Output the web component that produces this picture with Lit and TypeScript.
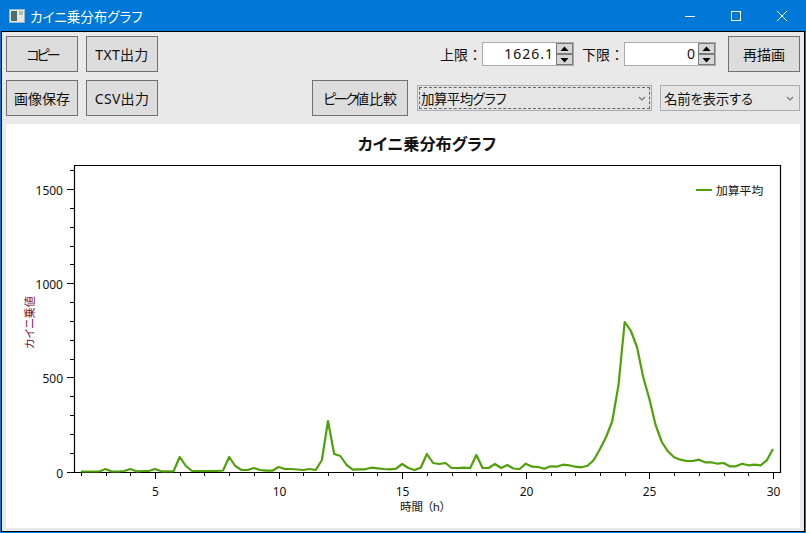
import { LitElement, html, css, svg } from "lit";
import { customElement } from "lit/decorators.js";

// Curve height in px above the zero line, one value per quarter hour from t=2 to t=30.
const H = [
  0.5, 0.5, 0.5, 0.5, 3, 0.5, 0.5, 1, 3, 0.7, 1, 1, 3, 0.7, 0.7, 0.7,
  15, 6, 1, 1, 1, 1, 1, 1.5, 15, 6, 2, 2, 4, 2, 1.3, 1.3,
  5, 3, 3, 2.5, 2, 3, 2, 12, 51, 18, 16, 7, 2.3, 2.7, 2.7, 4.3,
  3.7, 3, 2.7, 3.3, 8, 4, 2, 4.3, 18, 9, 8, 9, 4, 4, 4.3, 4,
  17, 4, 4, 8, 4, 7, 3.5, 3, 8.3, 5.3, 5, 3.3, 5.7, 5.3, 7.3, 6.7,
  5.3, 4.7, 6.3, 12, 23, 35, 51, 87, 150, 141, 125, 95, 73, 47, 30, 20.7,
  14.7, 12.3, 11, 11, 12.3, 9.7, 9.7, 8.3, 9, 5.7, 5.7, 8.3, 6.7, 7.3, 6.7, 11.7,
  23,
];

const X = (t: number) => 155 + (t - 5) * 24.72;
const Y = (v: number) => 472 - v * 0.1882;

const POINTS = H.map((h, i) => `${X(2 + i * 0.25).toFixed(1)},${(472 - h).toFixed(1)}`).join(" ");

@customElement("app-spin")
class AppSpin extends LitElement {
  static properties = { value: {} };
  value = "";
  static styles = css`
    :host { display: flex; height: 24px; border: 1px solid #ababab; box-sizing: border-box; background: #fff; }
    .val { width: 73px; text-align: right; font-size: 14px; line-height: 22px; padding-right: 2px; box-sizing: border-box; color: #111; letter-spacing: 1px; }
    .btns { display: flex; flex-direction: column; width: 17px; background: #a9a9a9; gap: 0; }
    .b { flex: 1; background: #d6d6d6; border: 1px solid #7a7a7a; box-sizing: border-box; display: flex; align-items: center; justify-content: center; }
    svg { display: block; }
  `;
  render() {
    return html`<div class="val">${this.value}</div>
      <div class="btns">
        <div class="b"><svg width="9" height="6" viewBox="0 0 9 6"><path d="M4.5 0.5L8.5 5H0.5Z" fill="#000"/></svg></div>
        <div class="b"><svg width="9" height="6" viewBox="0 0 9 6"><path d="M4.5 5.5L8.5 1H0.5Z" fill="#000"/></svg></div>
      </div>`;
  }
}

@customElement("app-root")
class AppRoot extends LitElement {
  static styles = css`
    :host {
      display: block; width: 806px; height: 533px; box-sizing: border-box; overflow: hidden;
      background: #0078d7; font-family: "Noto Sans", "Noto Sans CJK JP", sans-serif;
      font-feature-settings: "palt"; color: #111;
    }
    .titlebar { height: 31px; display: flex; align-items: center; color: #fff; padding-right: 1px; }
    .appicon { margin: 0 5px 0 9px; display: block; }
    .ttl { font-size: 13.5px; flex: 1; }
    .wbtn { width: 46px; height: 31px; display: flex; align-items: center; justify-content: center; }
    .wbtn svg { display: block; }
    .client {
      margin: 0 1px 1px; height: 501px; box-sizing: border-box; border: 1px solid #000;
      background: #e9e9e9; padding: 4px 4px 3px;
      display: flex; flex-direction: column;
    }
    .row { display: flex; align-items: center; height: 36px; gap: 8px; }
    .row + .row { margin: 8px 0; }
    button {
      width: 72px; height: 36px; padding: 0; margin: 0; border: 1px solid #707070; background: #dddddd;
      font: inherit; font-size: 14px; color: #111; font-feature-settings: "palt";
    }
    .kana { letter-spacing: -3px; }
    .lat { letter-spacing: 0.3px; }
    .wide { width: 96px; margin-left: 146px; }
    .wide .kana { letter-spacing: -2.5px; }
    .lim { display: flex; align-items: center; margin-left: auto; margin-right: 4px; }
    .lab { font-size: 14px; width: 42px; flex: none; font-feature-settings: normal; }
    .lab2 { margin-left: 8px; }
    .combo {
      height: 26px; box-sizing: border-box; border: 1px solid #acacac; background: #e5e5e5;
      font-size: 13.5px; display: flex; align-items: center; justify-content: space-between;
      padding: 0 5px 0 3px; position: relative;
    }
    .c1 { width: 235px; margin-left: 1px; letter-spacing: -0.6px; }
    .c2 { width: 140px; letter-spacing: -0.3px; }
    .focus { position: absolute; inset: 1px; border: 1px dashed #666; pointer-events: none; }
    .chart { flex: 1; background: #fff; }
    .chart svg { display: block; }
    text { font-family: "Noto Sans", "Noto Sans CJK JP", sans-serif; font-feature-settings: "palt"; fill: #111; }
    .tick { font-size: 12px; }
    .ctitle { font-size: 16.2px; font-weight: 700; }
    .ylab { font-size: 11.2px; fill: #7a1040; }
    .xlab { font-size: 11.5px; }
    .leg { font-size: 11.8px; }
  `;

  private chart() {
    const ys: number[] = [];
    for (let v = 0; v <= 1600; v += 100) ys.push(v);
    const xs: number[] = [];
    for (let t = 2; t <= 30; t++) xs.push(t);
    return svg`
      <text class="ctitle" x="427" y="150" text-anchor="middle">カイニ乗分布グラフ</text>
      <path d="M74.5 165.5H780.5V472.5H74.5Z" fill="none" stroke="#000" stroke-width="1.2"/>
      ${ys.map((v) => {
        const y = Math.floor(Y(v)) + 0.5;
        const major = v % 500 === 0;
        return svg`<line x1=${major ? 67 : 70} x2="74" y1=${y} y2=${y} stroke="#000"/>
          ${major ? svg`<text class="tick" x="63" y=${y + 5} text-anchor="end">${v}</text>` : ""}`;
      })}
      ${xs.map((t) => {
        const x = Math.round(X(t)) + 0.5;
        const major = t % 5 === 0;
        return svg`<line x1=${x} x2=${x} y1="473" y2=${major ? 479 : 476} stroke="#000"/>
          ${major ? svg`<text class="tick" x=${x} y="496" text-anchor="middle">${t}</text>` : ""}`;
      })}
      <polyline points=${POINTS} fill="none" stroke="#50a00a" stroke-width="2.2" stroke-linejoin="round"/>
      <line x1="696" x2="712" y1="190" y2="190" stroke="#50a00a" stroke-width="2"/>
      <text class="leg" x="716" y="195">加算平均</text>
      <text class="xlab" x="400" y="511">時間<tspan dx="4">（h）</tspan></text>
      <text class="ylab" transform="translate(34 322.5) rotate(-90)" text-anchor="middle">カイニ乗値</text>
    `;
  }

  render() {
    const chev = html`<svg width="8" height="5" viewBox="0 0 8 5"><path d="M1 1L4 4L7 1" fill="none" stroke="#777" stroke-width="1.2"/></svg>`;
    return html`
      <div class="titlebar">
        <svg class="appicon" width="16" height="14" viewBox="0 0 16 14">
          <rect x="0.5" y="0.5" width="15" height="13" fill="#e6e6e6" stroke="#9fb6c8"/>
          <rect x="2" y="2" width="6" height="10" fill="#4f6f6a"/>
          <rect x="10" y="2" width="4" height="4" fill="#a8c0b0"/>
        </svg>
        <div class="ttl">カイニ乗分布グラフ</div>
        <div class="wbtn"><svg width="10" height="10" viewBox="0 0 10 10"><path d="M0 5.5H10" stroke="#fff"/></svg></div>
        <div class="wbtn"><svg width="10" height="10" viewBox="0 0 10 10"><rect x="0.5" y="0.5" width="9" height="9" fill="none" stroke="#fff"/></svg></div>
        <div class="wbtn"><svg width="10" height="10" viewBox="0 0 10 10"><path d="M0 0L10 10M10 0L0 10" stroke="#fff"/></svg></div>
      </div>
      <div class="client">
        <div class="row">
          <button><span class="kana">コピー</span></button>
          <button class="lat">TXT出力</button>
          <div class="lim">
            <span class="lab">上限：</span>
            <app-spin value="1626.1"></app-spin>
            <span class="lab lab2">下限：</span>
            <app-spin value="0"></app-spin>
          </div>
          <button>再描画</button>
        </div>
        <div class="row">
          <button>画像保存</button>
          <button class="lat">CSV出力</button>
          <button class="wide"><span class="kana">ピーク</span>値比較</button>
          <div class="combo c1"><span>加算平均グラフ</span>${chev}<div class="focus"></div></div>
          <div class="combo c2"><span>名前を表示する</span>${chev}</div>
        </div>
        <div class="chart">
          <svg width="794" height="403" viewBox="6 124 794 403">${this.chart()}</svg>
        </div>
      </div>
    `;
  }
}
